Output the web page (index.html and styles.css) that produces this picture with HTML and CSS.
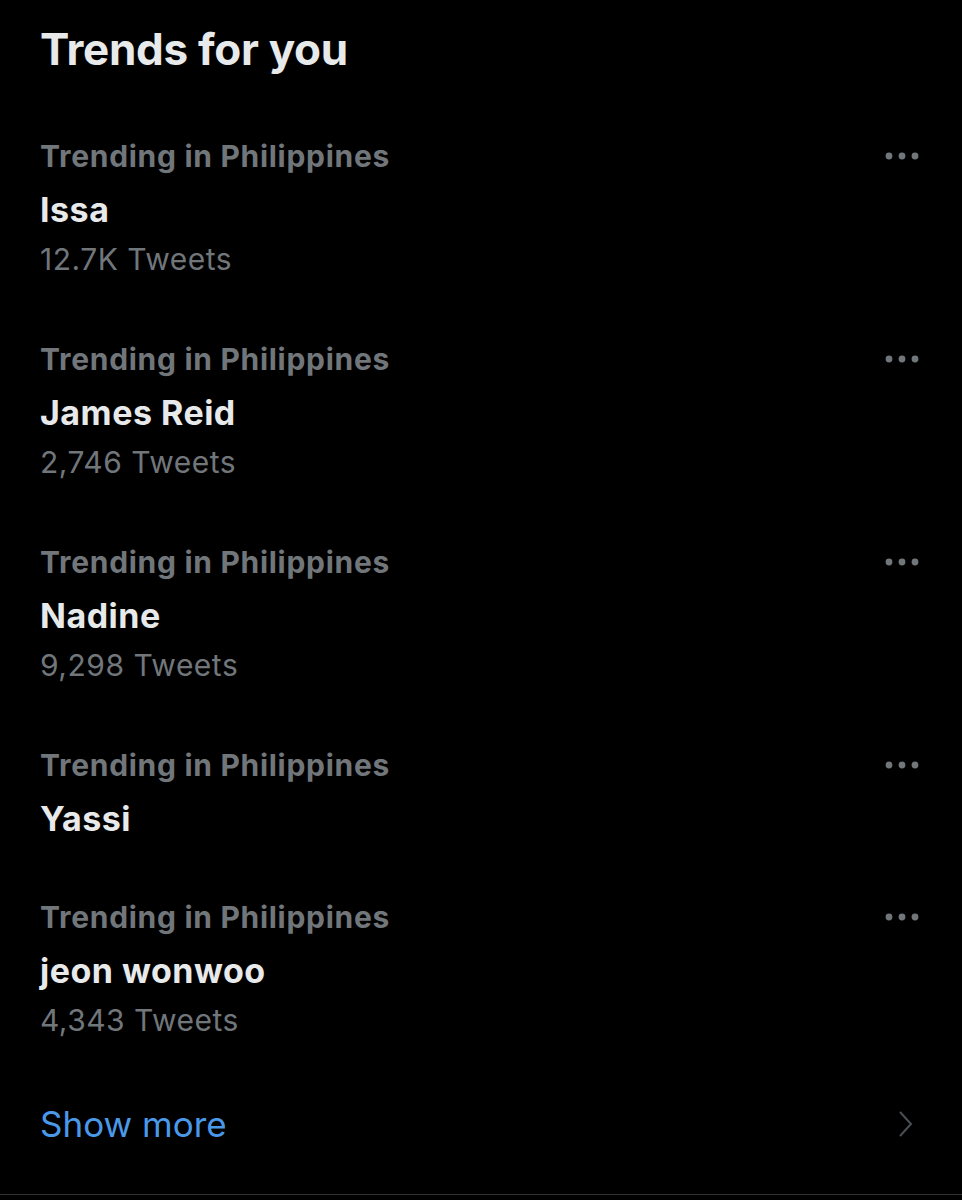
FILE: index.html
```html
<!DOCTYPE html>
<html lang="en">
<head>
    <meta charset="UTF-8">
    <meta name="viewport" content="width=device-width, initial-scale=1.0">
    <title>Trends for you</title>
    <link rel="stylesheet" href="styles.css">
</head>
<body>
    <div class="panel">
        <h1>Trends for you</h1>

        <div class="trend">
            <div class="trend-info">
                <div class="category">Trending in Philippines</div>
                <div class="title">Issa</div>
                <div class="count">12.7K Tweets</div>
            </div>
            <svg class="more" width="40" height="10" viewBox="0 0 40 10"><circle cx="7" cy="5" r="3.4"/><circle cx="20" cy="5" r="3.4"/><circle cx="33" cy="5" r="3.4"/></svg>
        </div>

        <div class="trend">
            <div class="trend-info">
                <div class="category">Trending in Philippines</div>
                <div class="title">James Reid</div>
                <div class="count">2,746 Tweets</div>
            </div>
            <svg class="more" width="40" height="10" viewBox="0 0 40 10"><circle cx="7" cy="5" r="3.4"/><circle cx="20" cy="5" r="3.4"/><circle cx="33" cy="5" r="3.4"/></svg>
        </div>

        <div class="trend">
            <div class="trend-info">
                <div class="category">Trending in Philippines</div>
                <div class="title">Nadine</div>
                <div class="count">9,298 Tweets</div>
            </div>
            <svg class="more" width="40" height="10" viewBox="0 0 40 10"><circle cx="7" cy="5" r="3.4"/><circle cx="20" cy="5" r="3.4"/><circle cx="33" cy="5" r="3.4"/></svg>
        </div>

        <div class="trend short">
            <div class="trend-info">
                <div class="category">Trending in Philippines</div>
                <div class="title">Yassi</div>
            </div>
            <svg class="more" width="40" height="10" viewBox="0 0 40 10"><circle cx="7" cy="5" r="3.4"/><circle cx="20" cy="5" r="3.4"/><circle cx="33" cy="5" r="3.4"/></svg>
        </div>

        <div class="trend">
            <div class="trend-info">
                <div class="category">Trending in Philippines</div>
                <div class="title">jeon wonwoo</div>
                <div class="count">4,343 Tweets</div>
            </div>
            <svg class="more" width="40" height="10" viewBox="0 0 40 10"><circle cx="7" cy="5" r="3.4"/><circle cx="20" cy="5" r="3.4"/><circle cx="33" cy="5" r="3.4"/></svg>
        </div>

        <div class="show-more">
            <span>Show more</span>
            <svg class="chevron" width="16" height="26" viewBox="0 0 16 26"><path d="M2 1 L13 13 L2 25"/></svg>
        </div>
    </div>
</body>
</html>
```

FILE: styles.css
```css
body {
    margin: 0;
    background-color: #000;
    font-family: Inter, "Noto Sans", sans-serif;
    color: #e7e9ea;
}
.panel {
    padding: 21px 40px 0 40px;
    border-bottom: 1px solid #2f3336;
}
h1 {
    margin: 0 0 59px 0;
    font-size: 44px;
    line-height: 56px;
    font-weight: 700;
    letter-spacing: -0.3px;
}
.trend {
    display: flex;
    justify-content: space-between;
    align-items: flex-start;
    margin-bottom: 57px;
}
.trend.short {
    margin-bottom: 52px;
}
.category {
    font-size: 30px;
    line-height: 40px;
    font-weight: 700;
    letter-spacing: 0.7px;
    color: #71767b;
}
.title {
    margin-top: 8px;
    font-size: 34px;
    line-height: 52px;
    font-weight: 700;
    letter-spacing: 0.5px;
}
.count {
    font-size: 30px;
    line-height: 46px;
    letter-spacing: 0.5px;
    color: #71767b;
}
.more {
    margin-top: 15px;
    fill: #71767b;
}
.show-more {
    display: flex;
    justify-content: space-between;
    align-items: center;
    height: 60px;
    margin-top: -6px;
    padding-bottom: 40px;
    font-size: 35px;
    color: #4a99e9;
}
.chevron {
    margin-right: 8px;
    fill: none;
    stroke: #4b4f53;
    stroke-width: 2;
}
```
